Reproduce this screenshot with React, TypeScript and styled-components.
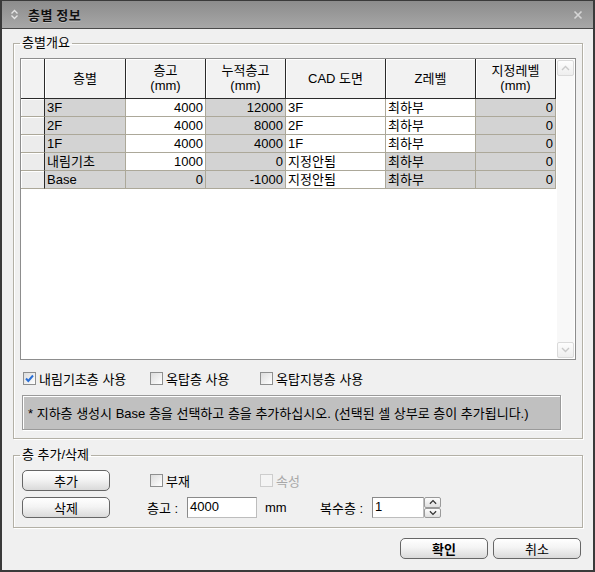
import React from "react";
import styled, { createGlobalStyle } from "styled-components";

const Global = createGlobalStyle`
  html, body { margin: 0; padding: 0; background: #f0f0f0; }
  body {
    font-family: "Liberation Sans", "Noto Sans CJK KR", sans-serif;
    font-size: 13px;
    color: #000;
  }
  * { box-sizing: border-box; }
`;

const FONT = `"Liberation Sans", "Noto Sans CJK KR", sans-serif`;

const Window = styled.div`
  width: 595px;
  height: 572px;
  background: #f0f0f0;
  border: 2px solid #3a3a3a;
  border-top: 1px solid #3a3a3a;
  display: flex;
  flex-direction: column;
  overflow: hidden;
`;

const TitleBar = styled.div`
  height: 28px;
  flex: 0 0 28px;
  display: flex;
  align-items: center;
  padding: 0 8px 0 8px;
  background: linear-gradient(#8c8c8c, #a7a7a7);
  border-bottom: 1px solid #4a4a4a;
`;

const TitleText = styled.span`
  margin-left: 9px;
  font: 700 13px "Noto Sans CJK KR", sans-serif;
  color: #111;
  text-shadow: 0 1px 0 rgba(255, 255, 255, 0.35);
  letter-spacing: 0.5px;
`;

const CloseIcon = styled.svg`
  margin-left: auto;
  margin-right: 2px;
`;

const Body = styled.div`
  padding: 7px 10px 0 11px;
  display: flex;
  flex-direction: column;
`;

const Group = styled.fieldset<{ $pt: number; $pb: number; $pl: number }>`
  margin: 0;
  min-width: 0;
  padding: ${(p) => p.$pt}px 6px ${(p) => p.$pb}px ${(p) => p.$pl}px;
  border: 1px solid #b3b0a6;
  box-shadow: 1px 1px 0 #fff, inset 1px 1px 0 #fff;
  & + & {
    margin-top: 9px;
  }
`;

const Legend = styled.legend<{ $shift: number }>`
  padding: 0 2px;
  margin-left: ${(p) => p.$shift}px;
  font: 400 13px ${FONT};
  line-height: 14px;
`;

const GridBox = styled.div`
  width: 556px;
  height: 302px;
  border: 1px solid #8d8d8d;
  background: #fff;
  display: flex;
`;

const Table = styled.div`
  width: 535px;
  flex: 0 0 535px;
  display: flex;
  flex-direction: column;
`;

const Row = styled.div<{ $h: number }>`
  display: grid;
  grid-template-columns: 24px 81px 80px 80px 100px 90px 80px;
  height: ${(p) => p.$h}px;
`;

const HeadCell = styled.div`
  background: #f2f2f2;
  border-right: 1px solid #2a2a2a;
  border-bottom: 1px solid #2a2a2a;
  box-shadow: inset 1px 1px 0 #fff;
  display: flex;
  align-items: center;
  justify-content: center;
  text-align: center;
  line-height: 15px;
  padding-bottom: 1px;
`;

const RowHead = styled.div`
  background: #ececec;
  border-right: 1px solid #2a2a2a;
  border-bottom: 1px solid #aca899;
  box-shadow: inset 1px 1px 0 #fff;
`;

const Cell = styled.div<{ $white?: boolean; $right?: boolean }>`
  border-right: 1px solid #aca899;
  border-bottom: 1px solid #aca899;
  background: ${(p) => (p.$white ? "#fff" : "#d3d3d3")};
  padding: 0 2px 0 2px;
  line-height: 17px;
  text-align: ${(p) => (p.$right ? "right" : "left")};
  white-space: nowrap;
  overflow: hidden;
`;

const ScrollTrack = styled.div`
  width: 17px;
  margin: 1px 0 1px 1px;
  display: flex;
  flex-direction: column;
  justify-content: space-between;
  background: #f8f8f8;
`;

const ScrollBtn = styled.div`
  height: 16px;
  border: 1px solid #dadada;
  border-radius: 2px;
  background: linear-gradient(#fdfdfd, #eeeeee);
  display: flex;
  align-items: center;
  justify-content: center;
`;

const CheckRow = styled.div`
  margin-top: 9px;
  height: 16px;
  padding-left: 3px;
  display: grid;
  grid-template-columns: 127px 110px auto;
  align-items: center;
`;

const CheckLabel = styled.label<{ $disabled?: boolean }>`
  display: flex;
  align-items: center;
  gap: 3px;
  color: ${(p) => (p.$disabled ? "#a8a8a8" : "#000")};
  white-space: nowrap;
`;

const Box = styled.span<{ $disabled?: boolean }>`
  width: 13px;
  height: 13px;
  flex: 0 0 13px;
  border: 1px solid ${(p) => (p.$disabled ? "#cdcdcd" : "#8e8f8f")};
  background: ${(p) =>
    p.$disabled ? "#f4f4f4" : "linear-gradient(135deg, #dcdcdc, #ffffff)"};
  display: flex;
  align-items: center;
  justify-content: center;
`;

const InfoBox = styled.div`
  margin: 10px 0 0 2px;
  width: 539px;
  height: 35px;
  background: #c0c0c0;
  border: 1px solid #9a9a9a;
  box-shadow: inset 1px 1px 0 #fff, 1px 1px 0 #fff;
  display: flex;
  align-items: center;
  padding: 0 0 1px 5px;
  white-space: nowrap;
`;

const EditGrid = styled.div`
  display: grid;
  grid-template-columns: 88px 37px 40px 70px 63px 52px 69px;
  grid-template-rows: 21px 21px;
  row-gap: 6px;
  align-items: center;
`;

const PushButton = styled.button<{ $bold?: boolean }>`
  width: 88px;
  height: 21px;
  padding: 0 0 1px 0;
  border: 1px solid #666;
  border-radius: 5px;
  background: linear-gradient(#ffffff, #f4f4f4 45%, #dadada);
  font: ${(p) => (p.$bold ? 700 : 400)} 13px "Noto Sans CJK KR", sans-serif;
  color: #000;
`;

const EditButton = styled(PushButton)<{ $row: number }>`
  grid-column: 1;
  grid-row: ${(p) => p.$row};
`;

const Label = styled.span<{ $col: number; $pad?: number }>`
  grid-column: ${(p) => p.$col};
  grid-row: 2;
  padding-left: ${(p) => p.$pad ?? 0}px;
  white-space: nowrap;
`;

const CheckCell = styled.div<{ $col: string }>`
  grid-column: ${(p) => p.$col};
  grid-row: 1;
  padding-left: 3px;
`;

const TextBox = styled.div<{ $w: number }>`
  width: ${(p) => p.$w}px;
  height: 21px;
  background: #fff;
  border: 1px solid #8a8a8a;
  border-right-color: #bdbdbd;
  border-bottom-color: #bdbdbd;
  padding: 1px 0 0 2px;
  line-height: 16px;
  font-family: "Liberation Sans", sans-serif;
`;

const FieldSlot = styled.div<{ $col: number }>`
  grid-column: ${(p) => p.$col};
  grid-row: 2;
  display: flex;
  align-items: center;
`;

const Spin = styled.div`
  display: flex;
  flex-direction: column;
  width: 17px;
  height: 21px;
`;

const SpinBtn = styled.div`
  flex: 1;
  border: 1px solid #9a9a9a;
  border-radius: 2px;
  background: linear-gradient(#fdfdfd, #e0e0e0);
  display: flex;
  align-items: center;
  justify-content: center;
`;

const Footer = styled.div`
  margin-top: 10px;
  display: flex;
  justify-content: flex-end;
  gap: 5px;
  padding-right: 2px;
`;

const Chevron = ({ up, color, w = 9 }: { up?: boolean; color: string; w?: number }) => (
  <svg width={w} height="6" viewBox="0 0 9 6">
    <path
      d={up ? "M1 5 L4.5 1.5 L8 5" : "M1 1 L4.5 4.5 L8 1"}
      fill="none"
      stroke={color}
      strokeWidth="1.4"
    />
  </svg>
);

const Check = () => (
  <svg width="11" height="11" viewBox="0 0 11 11">
    <path d="M2 5.5 L4.3 8 L9 2.5" fill="none" stroke="#2a6fd6" strokeWidth="2" />
  </svg>
);

const CheckBox = ({
  checked,
  disabled,
  children,
}: {
  checked?: boolean;
  disabled?: boolean;
  children: React.ReactNode;
}) => (
  <CheckLabel $disabled={disabled}>
    <Box $disabled={disabled}>{checked && <Check />}</Box>
    {children}
  </CheckLabel>
);

type RowData = {
  name: string;
  h: string;
  cum: string;
  cad: string;
  z: string;
  lv: string;
  hW: boolean;
  zW: boolean;
};

const rows: RowData[] = [
  { name: "3F", h: "4000", cum: "12000", cad: "3F", z: "최하부", lv: "0", hW: true, zW: true },
  { name: "2F", h: "4000", cum: "8000", cad: "2F", z: "최하부", lv: "0", hW: true, zW: true },
  { name: "1F", h: "4000", cum: "4000", cad: "1F", z: "최하부", lv: "0", hW: true, zW: true },
  { name: "내림기초", h: "1000", cum: "0", cad: "지정안됨", z: "최하부", lv: "0", hW: true, zW: false },
  { name: "Base", h: "0", cum: "-1000", cad: "지정안됨", z: "최하부", lv: "0", hW: false, zW: false },
];

export default function App() {
  return (
    <>
      <Global />
      <Window>
        <TitleBar>
          <svg width="9" height="11" viewBox="0 0 9 11">
            <path d="M1.5 4.5 L4.5 1.5 L7.5 4.5" fill="none" stroke="#e6e6e6" strokeWidth="1.3" />
            <path d="M1.5 6.5 L4.5 9.5 L7.5 6.5" fill="none" stroke="#e6e6e6" strokeWidth="1.3" />
          </svg>
          <TitleText>층별 정보</TitleText>
          <CloseIcon width="10" height="10" viewBox="0 0 10 10">
            <path d="M1.5 1.5 L8.5 8.5 M8.5 1.5 L1.5 8.5" stroke="#d6d6d6" strokeWidth="1.6" />
          </CloseIcon>
        </TitleBar>
        <Body>
          <Group $pt={8} $pb={8} $pl={6}>
            <Legend $shift={0}>층별개요</Legend>
            <GridBox>
              <Table>
                <Row $h={40}>
                  <HeadCell />
                  <HeadCell>층별</HeadCell>
                  <HeadCell>
                    층고
                    <br />
                    (mm)
                  </HeadCell>
                  <HeadCell>
                    누적층고
                    <br />
                    (mm)
                  </HeadCell>
                  <HeadCell>CAD 도면</HeadCell>
                  <HeadCell>Z레벨</HeadCell>
                  <HeadCell>
                    지정레벨
                    <br />
                    (mm)
                  </HeadCell>
                </Row>
                {rows.map((r) => (
                  <Row $h={18} key={r.name}>
                    <RowHead />
                    <Cell>{r.name}</Cell>
                    <Cell $white={r.hW} $right>
                      {r.h}
                    </Cell>
                    <Cell $right>{r.cum}</Cell>
                    <Cell $white>{r.cad}</Cell>
                    <Cell $white={r.zW}>{r.z}</Cell>
                    <Cell $right>{r.lv}</Cell>
                  </Row>
                ))}
              </Table>
              <ScrollTrack>
                <ScrollBtn>
                  <Chevron up color="#c9c9c9" />
                </ScrollBtn>
                <ScrollBtn>
                  <Chevron color="#c9c9c9" />
                </ScrollBtn>
              </ScrollTrack>
            </GridBox>
            <CheckRow>
              <CheckBox checked>내림기초층 사용</CheckBox>
              <CheckBox>옥탑층 사용</CheckBox>
              <CheckBox>옥탑지붕층 사용</CheckBox>
            </CheckRow>
            <InfoBox>
              * 지하층 생성시 Base 층을 선택하고 층을 추가하십시오. (선택된 셀 상부로 층이 추가됩니다.)
            </InfoBox>
          </Group>
          <Group $pt={8} $pb={9} $pl={8}>
            <Legend $shift={-2}>층 추가/삭제</Legend>
            <EditGrid>
              <EditButton $row={1}>추가</EditButton>
              <CheckCell $col="3 / 5">
                <CheckBox>부재</CheckBox>
              </CheckCell>
              <CheckCell $col="5 / 7">
                <CheckBox disabled>속성</CheckBox>
              </CheckCell>
              <EditButton $row={2}>삭제</EditButton>
              <Label $col={3}>층고 :</Label>
              <FieldSlot $col={4}>
                <TextBox $w={70}>4000</TextBox>
              </FieldSlot>
              <Label $col={5} $pad={8}>
                mm
              </Label>
              <Label $col={6}>복수층 :</Label>
              <FieldSlot $col={7}>
                <TextBox $w={52}>1</TextBox>
                <Spin>
                  <SpinBtn>
                    <Chevron up color="#333" w={8} />
                  </SpinBtn>
                  <SpinBtn>
                    <Chevron color="#333" w={8} />
                  </SpinBtn>
                </Spin>
              </FieldSlot>
            </EditGrid>
          </Group>
          <Footer>
            <PushButton $bold>확인</PushButton>
            <PushButton>취소</PushButton>
          </Footer>
        </Body>
      </Window>
    </>
  );
}
